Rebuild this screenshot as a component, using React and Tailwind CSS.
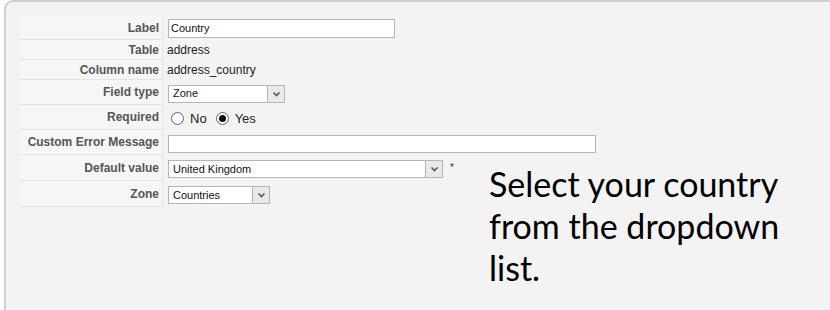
import React from "react";

const F = { fontFamily: '"Liberation Sans", Arial, sans-serif' };

function Row({ label, h, children }) {
  return (
    <div className="flex" style={{ height: h }}>
      <div className="w-[143px] shrink-0 flex items-center justify-end pr-[3px] bg-[#f6f6f6] border-r border-b border-[#e3e3e3] text-[12px] font-bold text-[#555]">
        {label}
      </div>
      <div className="flex-1 flex items-center pl-[4px] text-[12px] text-[#222]">{children}</div>
    </div>
  );
}

function Select({ w, value }) {
  return (
    <div className="ml-[1px] mt-[2px] flex h-[18px] border border-[#b5b5b5] bg-white" style={{ width: w }}>
      <div className="flex-1 flex items-center pl-[4px] text-[11px] text-[#111]">{value}</div>
      <div className="w-[17px] h-full bg-[#e9e9e9] border-l border-[#b5b5b5] flex items-center justify-center">
        <svg width="9" height="6" viewBox="0 0 9 6">
          <path d="M1.5 1.5 L4.5 4.5 L7.5 1.5" fill="none" stroke="#555" strokeWidth="1.6" />
        </svg>
      </div>
    </div>
  );
}

function Radio({ checked }) {
  return (
    <span className="inline-flex w-[13px] h-[13px] rounded-full border border-[#666] bg-white items-center justify-center">
      {checked && <span className="w-[7px] h-[7px] rounded-full bg-[#111]" />}
    </span>
  );
}

export default function App() {
  return (
    <div className="w-[830px] h-[310px] bg-white overflow-hidden relative" style={F}>
      <div className="absolute left-[4px] top-0 w-[840px] h-[320px] bg-[#f3f3f3] border-l-2 border-t-2 border-[#cfcfcf] rounded-tl-[9px]">
        <div className="ml-[14px] mt-[14px] w-[600px]">
          <Row label="Label" h={24}>
            <div className="ml-[1px] w-[227px] h-[19px] border border-[#b5b5b5] bg-white flex items-center pl-[2px] text-[11px] text-[#111]">
              Country
            </div>
          </Row>
          <Row label="Table" h={20}>
            <span className="text-[12px] text-[#222]">address</span>
          </Row>
          <Row label="Column name" h={20}>
            <span className="text-[12px] text-[#222]">address_country</span>
          </Row>
          <Row label="Field type" h={25}>
            <Select w={117} value="Zone" />
          </Row>
          <Row label="Required" h={25}>
            <div className="flex items-center text-[13px] text-[#222] ml-[4px] mt-[2px]">
              <Radio />
              <span className="ml-[6px]">No</span>
              <span className="ml-[9px] flex"><Radio checked /></span>
              <span className="ml-[6px] flex">Yes</span>
            </div>
          </Row>
          <Row label="Custom Error Message" h={25}>
            <div className="ml-[1px] mt-[2px] w-[428px] h-[18px] border border-[#b5b5b5] bg-white" />
          </Row>
          <Row label="Default value" h={26}>
            <Select w={275} value="United Kingdom" />
            <span className="ml-[7px] -mt-[2px] text-[10px] text-[#333]">*</span>
          </Row>
          <Row label="Zone" h={26}>
            <Select w={102} value="Countries" />
          </Row>
        </div>
      </div>
      <div
        className="absolute left-[489px] top-[163px] text-[34px] leading-[42px] text-black"
        style={{ fontFamily: 'Lato, "Open Sans", sans-serif' }}
      >
        Select your country
        <br />
        from the dropdown
        <br />
        list.
      </div>
    </div>
  );
}
